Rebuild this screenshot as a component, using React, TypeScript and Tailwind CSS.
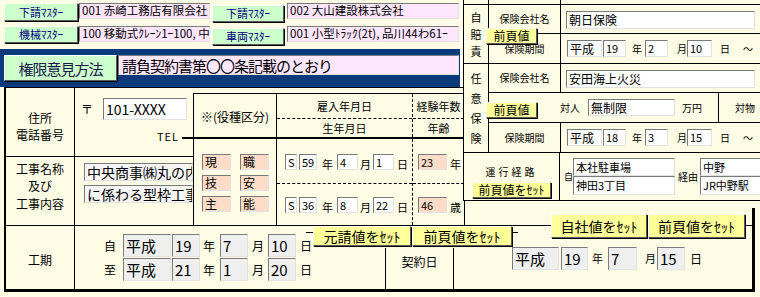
import React from "react";

type P = { c?: string; children?: React.ReactNode };

const SUNK =
  "border border-t-[#7a7a7a] border-l-[#7a7a7a] border-r-[#e2e2e2] border-b-[#e2e2e2]";
const RAISED =
  "border border-t-[#ffffff] border-l-[#ffffff] border-r-[#5a5a5a] border-b-[#5a5a5a] shadow-[1px_1px_0_0_#000]";

function Box({ c = "", children }: P) {
  return (
    <div
      className={`flex shrink-0 items-center overflow-hidden whitespace-nowrap pl-[2px] leading-none ${SUNK} ${c}`}
    >
      {children}
    </div>
  );
}

function Btn({ c = "", children }: P) {
  return (
    <div
      className={`flex shrink-0 items-center justify-center whitespace-nowrap leading-none ${RAISED} ${c}`}
    >
      {children}
    </div>
  );
}

function L({ c = "", children }: P) {
  return <span className={`shrink-0 whitespace-nowrap leading-none ${c}`}>{children}</span>;
}

function DateRow({ a, y, m, d, c = "" }: { a: string; y: string; m: string; d: string; c?: string }) {
  return (
    <div className={`flex h-[23px] items-center ${c}`}>
      <L c="w-[12px] text-[12px]">{a}</L>
      <Box c="ml-[7px] h-[23px] w-[48px] bg-[#efefef] text-[15px]">平成</Box>
      <Box c="ml-[1px] h-[23px] w-[28px] bg-[#efefef] text-[15px]">{y}</Box>
      <L c="ml-[3px] text-[12px]">年</L>
      <Box c="ml-[5px] h-[23px] w-[28px] bg-[#efefef] text-[15px]">{m}</Box>
      <L c="ml-[4px] text-[12px]">月</L>
      <Box c="ml-[4px] h-[23px] w-[28px] bg-[#efefef] text-[15px]">{d}</Box>
      <L c="ml-[4px] text-[12px]">日</L>
    </div>
  );
}

function Ymd({ s, y, m, d }: { s: string; y: string; m: string; d: string }) {
  return (
    <div className="flex h-[16px] items-end">
      <Box c="h-[16px] w-[12px] bg-white text-[11px]">{s}</Box>
      <Box c="ml-[2px] h-[16px] w-[18px] bg-white text-[11px]">{y}</Box>
      <L c="ml-[5px] text-[11px]">年</L>
      <Box c="ml-[4px] h-[16px] w-[21px] bg-white text-[11px]">{m}</Box>
      <L c="ml-[2px] text-[11px]">月</L>
      <Box c="ml-[2px] h-[16px] w-[21px] bg-white text-[11px]">{d}</Box>
      <L c="ml-[3px] text-[11px]">日</L>
    </div>
  );
}

function Period({ y, m, d }: { y: string; m: string; d: string }) {
  return (
    <div className="flex items-center pl-[6px] text-[10px]">
      <Box c="h-[17px] w-[35px] bg-white text-[12px]">平成</Box>
      <Box c="ml-[1px] h-[17px] w-[23px] bg-white text-[11px]">{y}</Box>
      <L c="ml-[6px]">年</L>
      <Box c="ml-[3px] h-[17px] w-[23px] bg-white text-[11px]">{m}</Box>
      <L c="ml-[9px]">月</L>
      <Box c="ml-[0px] h-[17px] w-[25px] bg-white text-[11px]">{d}</Box>
      <L c="ml-[8px]">日</L>
      <L c="ml-[13px]">～</L>
    </div>
  );
}

export default function App() {
  return (
    <div className="relative h-[297px] w-[760px] overflow-hidden bg-[#fffce5] font-['Noto_Sans_CJK_JP',sans-serif] text-black">
      {/* top master rows */}
      <div className="flex h-[23px] w-[460px] items-start pl-[4px] pt-[3px]">
        <Btn c="h-[18px] w-[74px] bg-[#ccffcc] text-[11px] text-[#000080]">下請ﾏｽﾀｰ</Btn>
        <Box c="ml-[1px] h-[16px] w-[131px] bg-[#ffe6ff] text-[11.5px]">001 赤崎工務店有限会社</Box>
        <Btn c="ml-[2px] mt-[2px] h-[17px] w-[72px] bg-[#ccffcc] text-[11px] text-[#000080]">下請ﾏｽﾀｰ</Btn>
        <Box c="ml-[3px] h-[16px] w-[172px] bg-[#ffe6ff] text-[11.5px]">002 大山建設株式会社</Box>
      </div>
      <div className="flex h-[26px] w-[460px] items-start pl-[4px] pt-[3px]">
        <Btn c="h-[17px] w-[74px] bg-[#ccffcc] text-[11px] text-[#000080]">機械ﾏｽﾀｰ</Btn>
        <Box c="ml-[1px] h-[16px] w-[131px] bg-[#ffe6ff] text-[11.5px]">100 移動式ｸﾚｰﾝ1ｰ100, 中:</Box>
        <Btn c="ml-[2px] mt-[2px] h-[17px] w-[72px] bg-[#ccffcc] text-[11px] text-[#000080]">車両ﾏｽﾀｰ</Btn>
        <Box c="ml-[3px] h-[16px] w-[172px] bg-[#ffe6ff] text-[11.5px]">001 小型ﾄﾗｯｸ(2t), 品川44わ61ｰ</Box>
      </div>

      {/* navy band */}
      <div className="flex h-[38px] w-[460px] items-start bg-[#0b3a7a] pl-[4px] pt-[6px]">
        <Btn c="h-[26px] w-[113px] bg-[#ccffcc] text-[15px] tracking-[-1px] text-[#1a1a48]">権限意見方法</Btn>
        <Box c="ml-[1px] h-[20px] w-[341px] bg-[#ffe6ff] pl-[3px] text-[15px] tracking-[-1px]">
          請負契約書第〇〇条記載のとおり
        </Box>
      </div>

      {/* main frame */}
      <div className="ml-[4px] w-[751px] border-b-[3px] border-l-2 border-t border-black">
        {/* 住所 */}
        <div className="flex h-[69px] border-b border-black">
          <div className="flex w-[69px] shrink-0 flex-col items-center justify-center border-r border-black pt-[8px] text-[12px] leading-[17px]">
            <span>住所</span>
            <span>電話番号</span>
          </div>
          <div className="flex-1">
            <div className="mt-[10px] flex items-center pl-[6px]">
              <L c="text-[12px]">〒</L>
              <Box c="ml-[10px] h-[22px] w-[84px] bg-white text-[14px]">101-XXXX</Box>
            </div>
            <div className="mt-[11px] pl-[82px] text-[11px] leading-none tracking-[1px]">TEL</div>
          </div>
        </div>
        {/* 工事名称 */}
        <div className="flex h-[69px] border-b border-black">
          <div className="flex w-[69px] shrink-0 flex-col items-center justify-center border-r border-black pb-[10px] text-[12px] leading-[17.5px]">
            <span>工事名称</span>
            <span>及び</span>
            <span>工事内容</span>
          </div>
          <div className="flex-1 pl-[9px] pt-[6px]">
            <Box c="h-[18px] w-[109px] bg-[#f6f6f6] text-[14px]">中央商事㈱丸の内</Box>
            <Box c="mt-[4px] h-[18px] w-[109px] bg-[#f6f6f6] text-[14px]">に係わる型枠工事</Box>
          </div>
        </div>
        {/* 工期 */}
        <div className="flex h-[63px] border-r-[3px] border-black">
          <div className="flex w-[69px] shrink-0 items-center justify-center border-r border-black pt-[4px] text-[12px]">
            工期
          </div>
          <div className="w-[310px] shrink-0 pl-[29px] pt-[8px]">
            <DateRow a="自" y="19" m="7" d="10" />
            <DateRow a="至" y="21" m="1" d="20" c="mt-[1px]" />
          </div>
          <div className="mt-[22px] flex w-[69px] shrink-0 justify-center border-x border-black pt-[8px] text-[12px] leading-none">
            契約日
          </div>
          <div className="mt-[21px] flex h-[23px] items-center self-start pl-[58px]">
            <Box c="h-[23px] w-[47px] bg-[#efefef] text-[15px]">平成</Box>
            <Box c="ml-[2px] h-[23px] w-[27px] bg-[#efefef] text-[15px]">19</Box>
            <L c="ml-[4px] text-[11px]">年</L>
            <Box c="ml-[5px] h-[23px] w-[29px] bg-[#efefef] text-[15px]">7</Box>
            <L c="ml-[8px] text-[11px]">月</L>
            <Box c="ml-[1px] h-[23px] w-[28px] bg-[#efefef] text-[15px]">15</Box>
            <L c="ml-[5px] text-[12px]">日</L>
          </div>
        </div>
      </div>

      {/* 役種 panel (overlapping sub-form) */}
      <div className="absolute left-[193px] top-[93px] z-10 h-[132px] w-[272px] border-l border-r border-t border-black bg-[#fffce5]">
        <div className="absolute left-[-12px] top-[43px] h-[2px] w-[12px] bg-black" />
        <div className="flex h-[45px] border-b-2 border-black">
          <div className="flex w-[83px] shrink-0 items-center justify-center border-r border-black pt-[3px] text-[12px] leading-none">
            ※(役種区分)
          </div>
          <div className="w-[136px] shrink-0 border-r border-dashed border-black">
            <div className="flex h-[25px] items-center justify-center border-b border-dashed border-black text-[11px] leading-none">
              雇入年月日
            </div>
            <div className="flex h-[18px] items-center justify-center text-[11px] leading-none">生年月日</div>
          </div>
          <div className="flex-1">
            <div className="flex h-[25px] items-center justify-center border-b border-dashed border-black text-[11px] leading-none">
              経験年数
            </div>
            <div className="flex h-[18px] items-center justify-center text-[11px] leading-none">年齢</div>
          </div>
        </div>
        <div className="flex h-[86px]">
          <div className="grid w-[83px] shrink-0 grid-cols-[29px_29px] content-start gap-x-[9px] gap-y-[5px] border-r border-black pl-[8px] pt-[15px]">
            {["現", "職", "技", "安", "主", "能"].map((t) => (
              <Box key={t} c="h-[16px] w-[29px] bg-[#ffdcc8] text-[12px]">
                {t}
              </Box>
            ))}
          </div>
          <div className="w-[136px] shrink-0 border-r border-dashed border-black">
            <div className="h-[45px] border-b border-dashed border-black pl-[8px] pt-[15px]">
              <Ymd s="S" y="59" m="4" d="1" />
            </div>
            <div className="pl-[8px] pt-[13px]">
              <Ymd s="S" y="36" m="8" d="22" />
            </div>
          </div>
          <div className="flex-1">
            <div className="h-[45px] border-b border-dashed border-black pl-[5px] pt-[15px]">
              <div className="flex h-[16px] items-end">
                <Box c="h-[16px] w-[29px] bg-[#ffdcc8] text-[11px]">23</Box>
                <L c="ml-[3px] text-[11px]">年</L>
              </div>
            </div>
            <div className="pl-[5px] pt-[13px]">
              <div className="flex h-[16px] items-end">
                <Box c="h-[16px] w-[29px] bg-[#ffdcc8] text-[11px]">46</Box>
                <L c="ml-[3px] text-[11px]">歳</L>
              </div>
            </div>
          </div>
        </div>
      </div>

      {/* insurance / route panel (overlapping sub-form) */}
      <div className="absolute left-[463px] top-0 z-20 h-[201px] w-[297px] border-b border-l border-black bg-[#fffce5] text-[10px]">
        <div className="flex h-[5px] border-b border-black">
          <div className="w-[25px] border-r border-black" />
          <div className="w-[72px] border-r border-black" />
        </div>
        {/* 自賠責 */}
        <div className="flex h-[59px] border-b border-black">
          <div className="flex w-[25px] shrink-0 flex-col items-center border-r border-black pt-[4px] text-[11px] leading-[17px]">
            <span>自</span>
            <span>賠</span>
            <span>責</span>
          </div>
          <div className="flex-1">
            <div className="flex h-[29px] border-b border-black">
              <div className="flex w-[72px] shrink-0 items-center justify-center border-r border-black leading-none">
                保険会社名
              </div>
              <div className="pl-[5px] pt-[6px]">
                <Box c="h-[18px] w-[189px] bg-white text-[12px]">朝日保険</Box>
              </div>
            </div>
            <div className="flex h-[29px]">
              <div className="flex w-[72px] shrink-0 items-center justify-center border-r border-black leading-none">
                保険期間
              </div>
              <Period y="19" m="2" d="10" />
            </div>
          </div>
        </div>
        {/* 任意保険 */}
        <div className="flex h-[89px] border-b border-black">
          <div className="flex w-[25px] shrink-0 flex-col items-center border-r border-black pt-[4px] text-[11px] leading-[20px]">
            <span>任</span>
            <span>意</span>
            <span>保</span>
            <span>険</span>
          </div>
          <div className="flex-1">
            <div className="flex h-[29px] border-b border-black">
              <div className="flex w-[72px] shrink-0 items-center justify-center border-r border-black leading-none">
                保険会社名
              </div>
              <div className="pl-[5px] pt-[6px]">
                <Box c="h-[18px] w-[189px] bg-white text-[12px]">安田海上火災</Box>
              </div>
            </div>
            <div className="flex h-[30px] items-center border-b border-black pl-[71px]">
              <L>対人</L>
              <Box c="ml-[8px] h-[17px] w-[87px] bg-white text-[12px]">無制限</Box>
              <L c="ml-[7px]">万円</L>
              <div className="ml-[16px] self-stretch border-l border-black" />
              <L c="ml-[16px]">対物</L>
            </div>
            <div className="flex h-[29px]">
              <div className="flex w-[72px] shrink-0 items-center justify-center border-r border-black leading-none">
                保険期間
              </div>
              <Period y="18" m="3" d="15" />
            </div>
          </div>
        </div>
        {/* 運行経路 */}
        <div className="flex h-[47px]">
          <div className="flex w-[96px] shrink-0 flex-col items-center border-r border-black pt-[13px]">
            <span className="text-[10px] leading-[12px] tracking-[3px]">運行経路</span>
            <Btn c="mt-[4px] h-[16px] w-[79px] bg-[#ffff99] text-[12px]">前頁値をｾｯﾄ</Btn>
          </div>
          <div className="flex items-center">
            <L c="ml-[4px] w-[9px] text-[9px]">自</L>
            <div className="flex flex-col">
              <Box c="h-[18px] w-[102px] bg-white text-[11px]">本社駐車場</Box>
              <Box c="h-[19px] w-[102px] bg-white text-[11px]">神田3丁目</Box>
            </div>
            <L c="ml-[3px]">経由</L>
            <div className="ml-[2px] flex flex-col">
              <Box c="h-[18px] w-[70px] bg-white text-[11px]">中野</Box>
              <Box c="h-[19px] w-[70px] bg-white text-[11px]">JR中野駅</Box>
            </div>
          </div>
        </div>
      </div>

      {/* floating buttons */}
      <Btn c="absolute left-[486px] top-[28px] z-30 h-[16px] w-[51px] bg-[#ffff99] text-[12px]">前頁値</Btn>
      <Btn c="absolute left-[486px] top-[102px] z-30 h-[16px] w-[51px] bg-[#ffff99] text-[12px]">前頁値</Btn>

      <div className="absolute left-[306px] top-[232px] z-20 h-px w-[212px] bg-black" />
      <div className="absolute left-[752px] top-[208px] z-20 h-[18px] w-[3px] bg-black" />
      <Btn c="absolute left-[313px] top-[226px] z-30 h-[20px] w-[98px] bg-[#ffff99] text-[14px]">元請値をｾｯﾄ</Btn>
      <Btn c="absolute left-[412px] top-[226px] z-30 h-[20px] w-[100px] bg-[#ffff99] text-[14px]">前頁値をｾｯﾄ</Btn>
      <Btn c="absolute left-[551px] top-[214px] z-30 h-[24px] w-[96px] bg-[#ffff99] text-[14px]">自社値をｾｯﾄ</Btn>
      <Btn c="absolute left-[648px] top-[214px] z-30 h-[24px] w-[97px] bg-[#ffff99] text-[14px]">前頁値をｾｯﾄ</Btn>
    </div>
  );
}
